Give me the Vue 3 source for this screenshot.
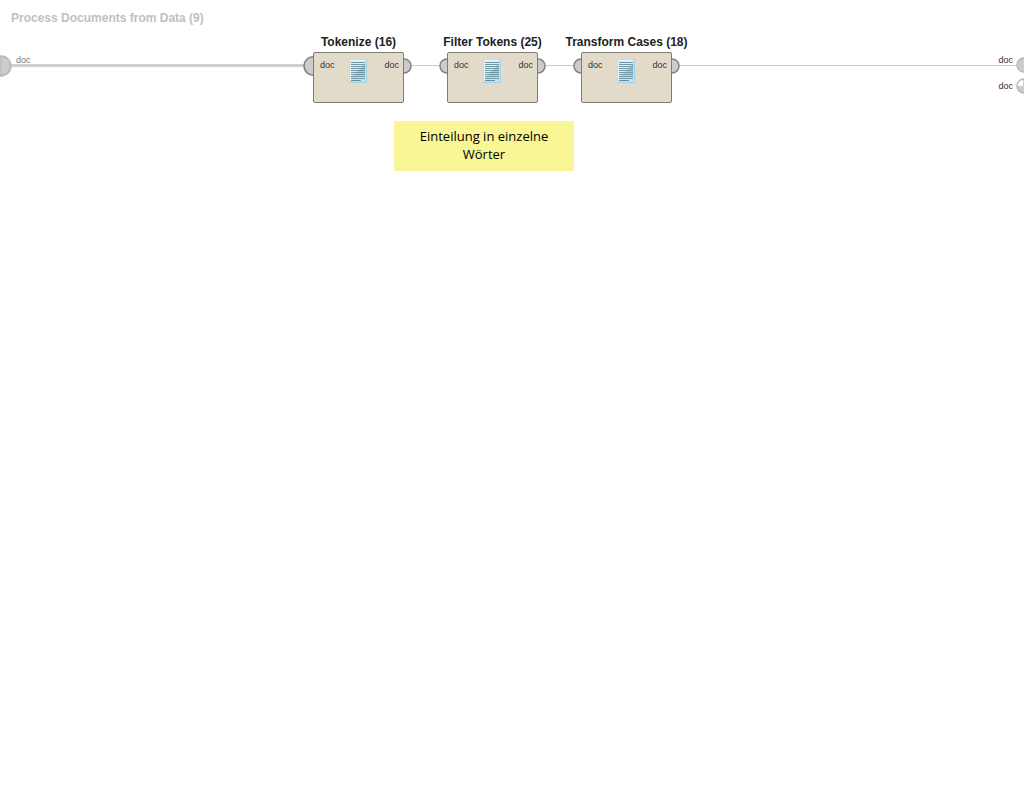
<script setup>
const operators = [
  { name: 'Tokenize (16)', x: 313, collection: true },
  { name: 'Filter Tokens (25)', x: 447, collection: false },
  { name: 'Transform Cases (18)', x: 581, collection: false },
]
const textLines = [3, 5, 7, 9, 11, 13, 15, 17, 19]
</script>

<template>
  <main class="canvas">
    <h1 class="title">Process Documents from Data (9)</h1>

    <div class="wire wire-source"></div>
    <div class="wire wire-first"></div>
    <div class="wire wire-second"></div>
    <div class="wire wire-result"></div>

    <div class="source">
      <svg class="source-port" width="12" height="22" viewBox="0 0 12 22">
        <circle cx="1" cy="11" r="9.8" fill="#cccccc" stroke="#b9b9b9" stroke-width="1.8" />
        <path d="M1 2V20" stroke="#b9b9b9" stroke-width="1" />
      </svg>
      <span>doc</span>
    </div>

    <section
      v-for="op in operators"
      :key="op.name"
      class="operator"
      :style="{ left: op.x + 'px' }"
    >
      <h2 class="name">{{ op.name }}</h2>
      <div class="box">
        <svg v-if="op.collection" class="port port-in" width="10" height="20" viewBox="0 0 10 20">
          <path d="M10 .8C5 .8 1 5 1 10S5 19.200 10 19.200" fill="#cccccc" stroke="#808080" stroke-width="1.600" />
        </svg>
        <svg v-else class="port port-in" width="8" height="16" viewBox="0 0 8 16">
          <path d="M8 1C4 1 1 4 1 8S4 15 8 15" fill="#cccccc" stroke="#808080" stroke-width="1.500" />
        </svg>
        <span class="in-label">doc</span>
        <svg class="icon" width="18" height="24" viewBox="0 0 18 24">
          <defs>
            <linearGradient :id="'fold' + op.x" x1="0" y1="0" x2="0" y2="1">
              <stop offset="0" stop-color="#8fc3d6" />
              <stop offset="0.5" stop-color="#9dcfe0" />
              <stop offset="1" stop-color="#c9eaf5" />
            </linearGradient>
          </defs>
          <rect width="18" height="24" fill="#a3d5e9" />
          <rect width="17" height="23" fill="#b5e2f3" />
          <rect x="1" y="1" width="15" height="21" fill="#e4f8fe" />
          <rect x="2" y="2" width="14" height="20" fill="#d3f0fa" />
          <path d="M16 5V22H2V19Z" :fill="`url(#fold${op.x})`" />
          <path
            v-for="y in textLines"
            :key="y"
            :d="`M2 ${y + 0.5}H16`"
            stroke="#7399a7"
            stroke-width="1"
          />
          <path d="M2 21.500H12" stroke="#668d9c" stroke-width="1" />
        </svg>
        <span class="out-label">doc</span>
        <svg class="port port-out" width="8" height="16" viewBox="0 0 8 16">
          <path d="M0 1C4 1 7 4 7 8S4 15 0 15" fill="#cccccc" stroke="#808080" stroke-width="1.500" />
        </svg>
      </div>
    </section>

    <p class="note">Einteilung in einzelne Wörter</p>

    <div class="results">
      <div class="result connected">
        <span>doc</span>
        <svg width="8" height="16" viewBox="0 0 8 16">
          <circle cx="8" cy="8" r="7" fill="#cccccc" stroke="#b9b9b9" stroke-width="1.500" />
        </svg>
      </div>
      <div class="result">
        <span>doc</span>
        <svg width="8" height="16" viewBox="0 0 8 16">
          <circle cx="8" cy="8" r="7" fill="#ffffff" />
          <path d="M1 8H8V15C4 15 1 12 1 8Z" fill="#cccccc" />
          <path d="M7 1H8V8H7Z" fill="#cccccc" />
          <circle cx="8" cy="8" r="7" fill="none" stroke="#b9b9b9" stroke-width="1.500" />
        </svg>
      </div>
    </div>
  </main>
</template>

<style>
body {
  margin: 0;
  background: #ffffff;
}
</style>

<style scoped>
.canvas {
  position: relative;
  min-height: 100vh;
  overflow: hidden;
  font-family: "Liberation Sans", Arial, sans-serif;
  font-size: 9px;
  line-height: 12px;
  color: #333333;
}
svg {
  display: block;
  flex: none;
}
.title {
  margin: 0;
  padding: 10px 11px;
  font-size: 12px;
  line-height: 16px;
  color: #bfbfbf;
}
.wire {
  position: absolute;
  top: 65px;
  height: 1px;
  background: #cccccc;
}
.wire-source {
  top: 64px;
  left: 11px;
  width: 294px;
  height: 3px;
  background: #d0d0d0;
}
.wire-first {
  left: 411px;
  width: 30px;
}
.wire-second {
  left: 545px;
  width: 30px;
}
.wire-result {
  left: 679px;
  right: 7px;
}
.source {
  position: absolute;
  top: 54px;
  left: 0;
  display: flex;
  gap: 4px;
  color: #777777;
}
.source-port {
  margin-top: 1px;
}
.operator {
  position: absolute;
  top: 34px;
  width: 91px;
  display: flex;
  flex-direction: column;
  align-items: center;
}
.name {
  margin: 0;
  padding-bottom: 2px;
  font-size: 12px;
  line-height: 16px;
  white-space: nowrap;
  color: #222222;
}
.box {
  position: relative;
  box-sizing: border-box;
  width: 100%;
  height: 51px;
  padding: 6px 1px 0 0;
  display: grid;
  grid-template-columns: 1fr auto 1fr;
  align-items: start;
  border: 1px solid #7f7b75;
  border-radius: 2px;
  background: #e3dbc9;
}
.in-label {
  padding-left: 6px;
}
.out-label {
  padding-right: 3px;
  text-align: right;
}
.port {
  position: absolute;
  top: 13px;
  transform: translateY(-50%);
}
.port-in {
  right: 100%;
  margin-right: 1px;
}
.port-out {
  left: 100%;
  margin-left: 1px;
}
.note {
  position: absolute;
  top: 121px;
  left: 394px;
  box-sizing: border-box;
  width: 180px;
  margin: 0;
  padding: 6px 20px 8px;
  font-family: "Open Sans", sans-serif;
  font-size: 13px;
  line-height: 18px;
  text-align: center;
  color: #000000;
  background: #f9f696;
}
.results {
  position: absolute;
  top: 57px;
  right: 0;
  display: flex;
  flex-direction: column;
  gap: 5px;
}
.result {
  display: flex;
  align-items: center;
  gap: 3px;
}
.connected {
  align-items: flex-start;
  line-height: 6px;
}
</style>
